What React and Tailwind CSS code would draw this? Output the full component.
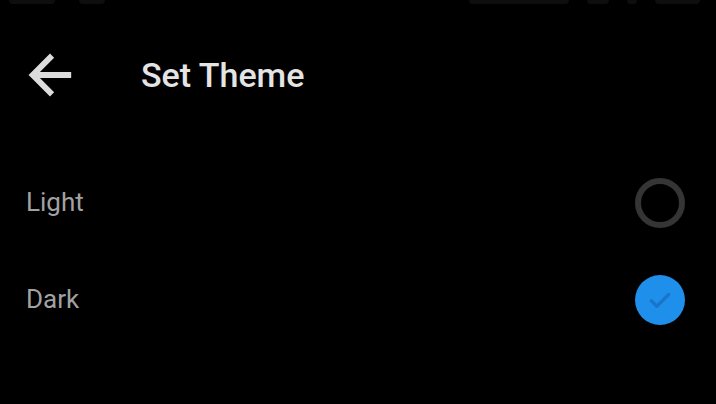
import React from "react";

function Arrow() {
  return (
    <svg width="62" height="62" viewBox="0 0 24 24" fill="#dcdcdc">
      <path d="M20.2 10.8H8.1l5.5-5.5L12 3.7 3.7 12l8.3 8.3 1.6-1.6-5.5-5.5h12.1v-2.4z" />
    </svg>
  );
}

function Radio({ checked }) {
  if (checked) {
    return (
      <div className="w-[50px] h-[50px] rounded-full bg-[#1e8fea] flex items-center justify-center">
        <svg width="30" height="30" viewBox="0 0 24 24" fill="none" stroke="#1a74cc" strokeWidth="2.6" strokeLinecap="round" strokeLinejoin="round">
          <path d="M5 12.5l4.5 4.5L19 7.5" />
        </svg>
      </div>
    );
  }
  return <div className="w-[50px] h-[50px] rounded-full border-[6px] border-[#353535]" />;
}

export default function App() {
  return (
    <div className="w-[716px] h-[404px] bg-black overflow-hidden" style={{ fontFamily: "Roboto, 'Noto Sans', sans-serif" }}>
      <div className="h-[28px] flex justify-between px-[9px]">
        <div className="flex gap-[24px]">
          <div className="w-[46px] h-[4px] bg-[#0e0e0e] rounded-b" />
          <div className="w-[26px] h-[4px] bg-[#0e0e0e] rounded-b" />
        </div>
        <div className="flex gap-[18px] pr-[7px]">
          <div className="w-[100px] h-[4px] bg-[#0e0e0e] rounded-b" />
          <div className="w-[22px] h-[4px] bg-[#0e0e0e] rounded-b" />
          <div className="w-[10px] h-[4px] bg-[#0e0e0e] rounded-b" />
          <div className="w-[45px] h-[4px] bg-[#0e0e0e] rounded-b" />
        </div>
      </div>
      <div className="h-[94px] flex items-center pl-[19px]">
        <Arrow />
        <div className="ml-[60px] text-[34px] font-medium text-[#e4e4e4] leading-none">Set Theme</div>
      </div>
      <div className="mt-[32px]">
        <div className="h-[97px] flex items-center justify-between pl-[26px] pr-[31px]">
          <span className="text-[26px] text-[#a2a2a2]">Light</span>
          <Radio checked={false} />
        </div>
        <div className="h-[97px] flex items-center justify-between pl-[26px] pr-[31px]">
          <span className="text-[26px] text-[#a2a2a2]">Dark</span>
          <Radio checked={true} />
        </div>
      </div>
    </div>
  );
}
